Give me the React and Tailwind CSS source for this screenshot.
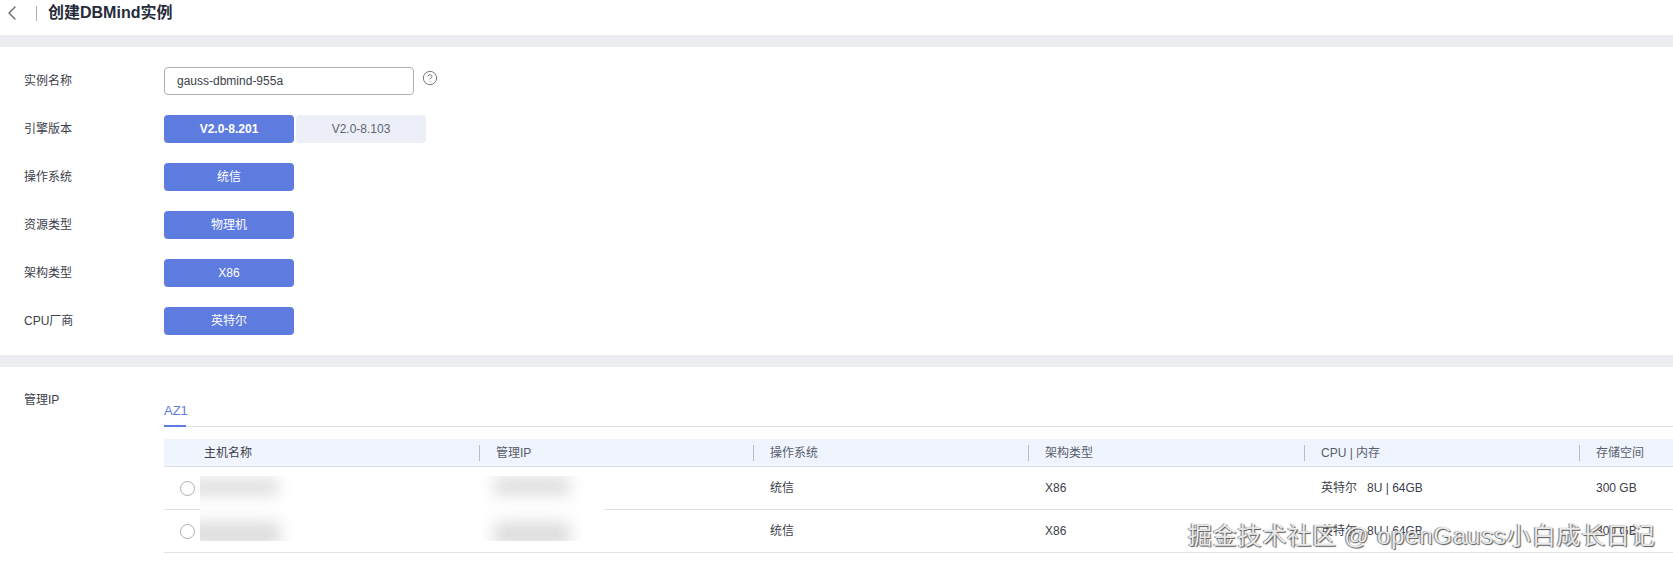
import { ChevronLeft, CircleHelp } from "lucide-react";

const FONT = "font-['Liberation_Sans','Noto_Sans_CJK_SC',sans-serif]";

const fields = [
  { label: "操作系统", value: "统信" },
  { label: "资源类型", value: "物理机" },
  { label: "架构类型", value: "X86" },
  { label: "CPU厂商", value: "英特尔" },
];

const columns = ["管理IP", "操作系统", "架构类型", "CPU | 内存", "存储空间"];

const rows = [
  { os: "统信", arch: "X86", cpu: "英特尔", spec: "8U | 64GB", disk: "300 GB" },
  { os: "统信", arch: "X86", cpu: "英特尔", spec: "8U | 64GB", disk: "300 GB" },
];

function Field({ label, children }) {
  return (
    <div className="flex items-center h-7">
      <div className="w-[140px] text-[#3c404b] truncate">{label}</div>
      {children}
    </div>
  );
}

function Choice({ children, active, bold }) {
  return (
    <div
      className={
        active
          ? `w-[130px] h-7 flex items-center justify-center rounded-sm bg-[#5e7ce0] text-white ${bold ? "font-bold" : ""}`
          : "w-[130px] h-7 flex items-center justify-center rounded-sm bg-[#eceff8] text-[#5f6470]"
      }
    >
      {children}
    </div>
  );
}

function Blurred({ className }) {
  return <div className={`absolute bg-[#dcdcdc] blur-[8px] ${className}`} />;
}

export default function App() {
  return (
    <div className={`${FONT} relative h-[568px] overflow-hidden bg-white text-xs text-[#3c404b]`}>
      {/* Header */}
      <div className="h-[35px] flex items-center pb-[9px]">
        <ChevronLeft size={24} strokeWidth={1.4} className="text-[#666]" />
        <div className="ml-3 w-px h-[15px] bg-[#b0b0b0]" />
        <h1 className="ml-[11px] text-base font-bold text-[#252b3a]">创建DBMind实例</h1>
      </div>

      <div className="h-3 bg-[#ebedf0]" />

      {/* Form */}
      <div className="flex flex-col gap-5 pl-6 pt-5 pb-5 shadow-[0_1px_2px_rgba(0,0,0,0.08)]">
        <Field label="实例名称">
          <div className="w-[250px] h-7 flex items-center pl-3 border border-[#adb0b8] rounded-sm">
            gauss-dbmind-955a
          </div>
          <CircleHelp size={16} strokeWidth={1.4} className="ml-2 -mt-1.5 text-[#6b6f78]" />
        </Field>
        <Field label="引擎版本">
          <div className="flex gap-0.5">
            <Choice active bold>V2.0-8.201</Choice>
            <Choice>V2.0-8.103</Choice>
          </div>
        </Field>
        {fields.map((f) => (
          <Field key={f.label} label={f.label}>
            <Choice active>{f.value}</Choice>
          </Field>
        ))}
      </div>

      <div className="h-3 bg-[#ebedf0] border-b border-[#e8eaee]" />

      {/* Management IP */}
      <div className="flex">
        <div className="w-[164px] shrink-0 pl-6 pt-[25px]">管理IP</div>
        <div className="flex-1 min-w-0">
          <div className="h-[60px] flex items-end border-b border-[#dfe1e6]">
            <div className="w-[22px] h-[33px] flex items-end pb-1.5 leading-4 whitespace-nowrap font-medium text-[#5e7ce0] border-b-2 border-[#5e7ce0] -mb-px text-[13px]">
              AZ1
            </div>
          </div>

          <div className="relative mt-3">
            <div className="grid grid-cols-[315px_274px_275px_276px_275px_1fr] h-[28px] items-center bg-[#f0f4fc] border-b border-[#dfe1e6]">
              <div className="pl-10">主机名称</div>
              {columns.map((c) => (
                <div key={c} className="flex items-center gap-4 text-[#575d6c]">
                  <span className="w-px h-4 bg-[#b9bcc4]" />
                  {c}
                </div>
              ))}
            </div>

            {rows.map((r, i) => (
              <div
                key={i}
                className="grid grid-cols-[315px_274px_275px_276px_275px_1fr] h-[43px] items-center border-b border-[#dfe1e6]"
              >
                <div className="pl-4">
                  <div className="w-[15px] h-[15px] rounded-full border border-[#adb0b8]" />
                </div>
                <div />
                <div className="pl-[17px]">{r.os}</div>
                <div className="pl-[17px]">{r.arch}</div>
                <div className="pl-[17px]">
                  {r.cpu}
                  <span className="ml-[10px]">{r.spec}</span>
                </div>
                <div className="pl-[17px]">{r.disk}</div>
              </div>
            ))}

            {/* masked host names and addresses */}
            <div className="absolute left-9 top-[37px] w-[404px] h-[65px] overflow-hidden bg-white">
              <Blurred className="-left-3 top-[3px] w-[90px] h-[16px]" />
              <Blurred className="-left-3 top-[46px] w-[92px] h-[24px]" />
              <Blurred className="left-[294px] top-[1px] w-[76px] h-[18px]" />
              <Blurred className="left-[294px] top-[46px] w-[76px] h-[24px]" />
            </div>
          </div>
        </div>
      </div>

      {/* Watermark */}
      <div className="absolute left-[1188px] top-[520px] text-[24px] leading-[32px] tracking-[0.8px] whitespace-nowrap text-white/85 [text-shadow:1px_1px_1px_#555,-1px_0_1px_#777]">
        掘金技术社区 @ openGauss小白成长日记
      </div>
    </div>
  );
}
